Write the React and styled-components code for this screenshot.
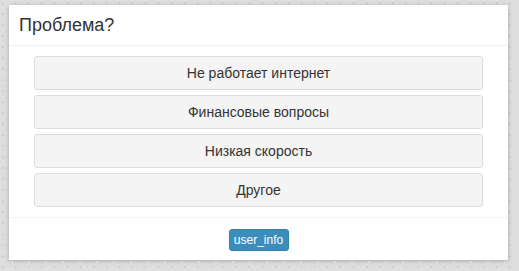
import React from 'react';
import styled, { createGlobalStyle } from 'styled-components';

const GlobalStyle = createGlobalStyle`
  html, body {
    margin: 0;
    padding: 0;
  }
  body {
    width: 519px;
    height: 271px;
    overflow: hidden;
    font-family: "Liberation Sans", Arial, sans-serif;
    color: #333;
    background-color: #dedede;
    background-image:
      radial-gradient(circle at 20% 30%, #c8c8c8 0.8px, transparent 1.2px),
      radial-gradient(circle at 70% 80%, #f0f0f0 0.8px, transparent 1.2px),
      radial-gradient(circle at 50% 60%, #cfcfcf 0.6px, transparent 1px);
    background-size: 13px 11px, 17px 19px, 7px 9px;
  }
`;

// page around the dialog
const Backdrop = styled.div`
  padding: 5px 11px 11px 9px;
`;

const Modal = styled.div`
  width: 499px;
  background: #fff;
  box-shadow: 0 1px 4px rgba(0, 0, 0, 0.25);
  display: flex;
  flex-direction: column;
`;

const Header = styled.div`
  height: 40px;
  padding: 0 10px;
  display: flex;
  align-items: center;
  border-bottom: 1px solid #f0f0f0;
`;

const Title = styled.h4`
  margin: 0;
  font-size: 18px;
  font-weight: normal;
  color: #333;
`;

const Body = styled.div`
  padding: 10px 25px 10px;
  display: flex;
  flex-direction: column;
  gap: 5px;
`;

const OptionButton = styled.button`
  height: 34px;
  background: #f4f4f4;
  border: 1px solid #ddd;
  border-radius: 3px;
  font-family: "Liberation Sans", Arial, sans-serif;
  font-size: 14px;
  color: #333;
  cursor: pointer;
`;

const Footer = styled.div`
  border-top: 1px solid #f4f4f4;
  padding: 11px 0 9px;
  display: flex;
  justify-content: center;
`;

const InfoButton = styled.button`
  height: 22px;
  width: 60px;
  padding: 0;
  background: #3c8dbc;
  border: 1px solid #367fa9;
  border-radius: 3px;
  color: #fff;
  font-family: "Liberation Sans", Arial, sans-serif;
  font-size: 12px;
  cursor: pointer;
`;

const options = ['Не работает интернет', 'Финансовые вопросы', 'Низкая скорость', 'Другое'];

const App = () => {
  return (
    <>
      <GlobalStyle />
      <Backdrop>
        <Modal>
          <Header>
            <Title>Проблема?</Title>
          </Header>
          <Body>
            {options.map((o) => (
              <OptionButton key={o}>{o}</OptionButton>
            ))}
          </Body>
          <Footer>
            <InfoButton>user_info</InfoButton>
          </Footer>
        </Modal>
      </Backdrop>
    </>
  );
};

export default App;
